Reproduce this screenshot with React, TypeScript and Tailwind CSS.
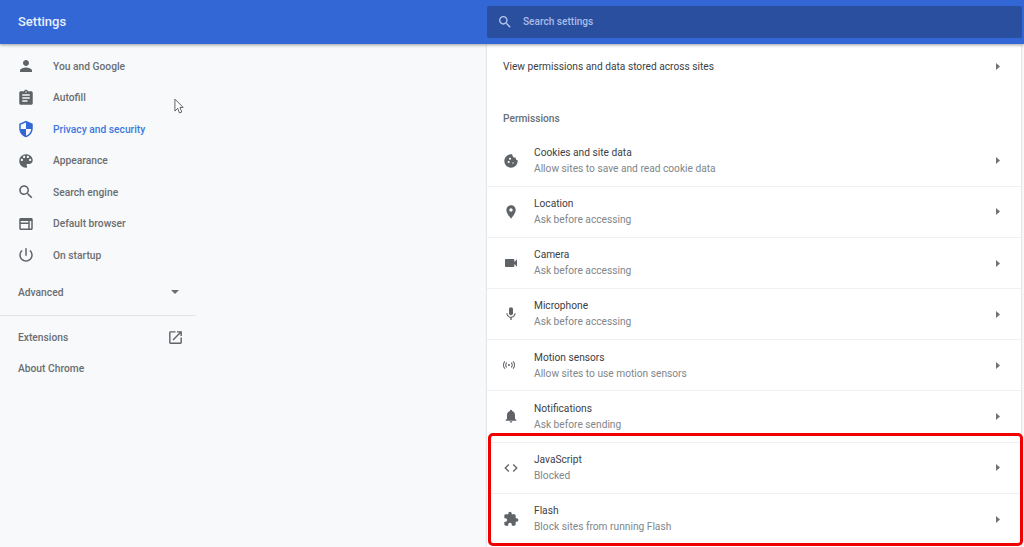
const PATHS = {
  person: "M12 12c2.21 0 4-1.79 4-4s-1.79-4-4-4-4 1.79-4 4 1.79 4 4 4zm0 2c-2.67 0-8 1.34-8 4v2h16v-2c0-2.66-5.33-4-8-4z",
  assignment: "M19 3h-4.18C14.4 1.84 13.3 1 12 1c-1.3 0-2.4.84-2.82 2H5c-1.1 0-2 .9-2 2v14c0 1.1.9 2 2 2h14c1.1 0 2-.9 2-2V5c0-1.1-.9-2-2-2zm-7 0c.55 0 1 .45 1 1s-.45 1-1 1-1-.45-1-1 .45-1 1-1zm2 14H7v-2h7v2zm3-4H7v-2h10v2zm0-4H7V7h10v2z",
  security: "M12 1L3 5v6c0 5.55 3.84 10.74 9 12 5.16-1.26 9-6.45 9-12V5l-9-4zm0 10.99h7c-.53 4.12-3.28 7.79-7 8.94V12H5V6.3l7-3.11v8.8z",
  palette: "M12 3c-4.97 0-9 4.03-9 9s4.03 9 9 9c.83 0 1.5-.67 1.5-1.5 0-.39-.15-.74-.39-1.01-.23-.26-.38-.61-.38-.99 0-.83.67-1.5 1.5-1.5H16c2.76 0 5-2.24 5-5 0-4.42-4.03-8-9-8zm-5.5 9c-.83 0-1.5-.67-1.5-1.5S5.67 9 6.5 9 8 9.67 8 10.5 7.33 12 6.5 12zm3-4C8.67 8 8 7.33 8 6.5S8.67 5 9.5 5s1.5.67 1.5 1.5S10.33 8 9.5 8zm5 0c-.83 0-1.5-.67-1.5-1.5S13.67 5 14.5 5s1.5.67 1.5 1.5S15.33 8 14.5 8zm3 4c-.83 0-1.5-.67-1.5-1.5S16.67 9 17.5 9s1.5.67 1.5 1.5-.67 1.5-1.5 1.5z",
  search: "M15.5 14h-.79l-.28-.27C15.41 12.59 16 11.11 16 9.5 16 5.91 13.09 3 9.5 3S3 5.91 3 9.5 5.91 16 9.5 16c1.61 0 3.09-.59 4.23-1.57l.27.28v.79l5 4.99L20.49 19l-4.99-5zm-6 0C7.01 14 5 11.99 5 9.5S7.01 5 9.5 5 14 7.01 14 9.5 11.99 14 9.5 14z",
  web: "M19 4H5c-1.11 0-2 .9-2 2v12c0 1.1.89 2 2 2h14c1.1 0 2-.9 2-2V6c0-1.1-.89-2-2-2zm-4 14H5V12h10v6zm4 0h-2V8h2v10zM5 10V8h10v2H5z",
  power: "M13 3h-2v10h2V3zm4.83 2.17l-1.42 1.42C17.99 7.86 19 9.81 19 12c0 3.87-3.13 7-7 7s-7-3.13-7-7c0-2.19 1.01-4.14 2.58-5.42L6.17 5.17C4.23 6.82 3 9.26 3 12c0 4.97 4.03 9 9 9s9-4.03 9-9c0-2.74-1.23-5.18-3.17-6.83z",
  open: "M19 19H5V5h7V3H5c-1.11 0-2 .9-2 2v14c0 1.1.89 2 2 2h14c1.1 0 2-.9 2-2v-7h-2v7zM14 3v2h3.59l-9.83 9.83 1.41 1.41L19 6.41V10h2V3h-7z",
  cookie: "M21.95 10.99c-1.79-.03-3.7-1.95-2.68-4.22-2.97 1-5.78-1.59-5.19-4.56C7.11.74 2 6.41 2 12c0 5.52 4.48 10 10 10 5.89 0 10.54-5.08 9.95-11.01zM8.5 15c-.83 0-1.5-.67-1.5-1.5S7.67 12 8.5 12s1.5.67 1.5 1.5S9.33 15 8.5 15zm2-5C9.67 10 9 9.33 9 8.5S9.67 7 10.5 7s1.5.67 1.5 1.5-.67 1.5-1.5 1.5zm4.5 6c-.55 0-1-.45-1-1s.45-1 1-1 1 .45 1 1-.45 1-1 1z",
  location: "M12 2C8.13 2 5 5.13 5 9c0 5.25 7 13 7 13s7-7.75 7-13c0-3.87-3.13-7-7-7zm0 9.5c-1.38 0-2.5-1.12-2.5-2.5s1.12-2.5 2.5-2.5 2.5 1.12 2.5 2.5-1.12 2.5-2.5 2.5z",
  camera: "M17 10.5V7c0-.55-.45-1-1-1H4c-.55 0-1 .45-1 1v10c0 .55.45 1 1 1h12c.55 0 1-.45 1-1v-3.5l4 4v-11l-4 4z",
  mic: "M12 14c1.66 0 2.99-1.34 2.99-3L15 5c0-1.66-1.34-3-3-3S9 3.34 9 5v6c0 1.66 1.34 3 3 3zm5.3-3c0 3-2.54 5.1-5.3 5.1S6.7 14 6.7 11H5c0 3.41 2.72 6.23 6 6.72V21h2v-3.28c3.28-.48 6-3.3 6-6.72h-1.7z",
  sensors: "M12 10a2 2 0 1 0 0 4 2 2 0 0 0 0-4zM7.05 6.4l1.3 1.5C7.2 9 6.5 10.4 6.5 12s.7 3 1.85 4.1l-1.3 1.5C5.2 16.1 4.5 14.2 4.5 12s.7-4.1 2.55-5.6zm9.9 0c1.85 1.5 2.55 3.4 2.55 5.6s-.7 4.1-2.55 5.6l-1.3-1.5c1.15-1.1 1.85-2.5 1.85-4.1s-.7-3-1.85-4.1zM3.4 4l1.3 1.5C2.9 7.2 2 9.5 2 12s.9 4.8 2.7 6.5L3.4 20C1.2 17.9 0 15.1 0 12s1.2-5.9 3.4-8zm17.2 0C22.8 6.1 24 8.9 24 12s-1.2 5.9-3.4 8l-1.3-1.5c1.8-1.7 2.7-4 2.7-6.5s-.9-4.8-2.7-6.5z",
  bell: "M12 22c1.1 0 2-.9 2-2h-4c0 1.1.89 2 2 2zm6-6v-5c0-3.07-1.64-5.64-4.5-6.32V4c0-.83-.67-1.5-1.5-1.5s-1.5.67-1.5 1.5v.68C7.63 5.36 6 7.92 6 11v5l-2 2v1h16v-1l-2-2z",
  code: "M9.4 16.6L4.8 12l4.6-4.6L8 6l-6 6 6 6 1.4-1.4zm5.2 0l4.6-4.6-4.6-4.6L16 6l6 6-6 6-1.4-1.4z",
  extension: "M20.5 11H19V7c0-1.1-.9-2-2-2h-4V3.5C13 2.12 11.88 1 10.5 1S8 2.12 8 3.5V5H4c-1.1 0-1.99.9-1.99 2v3.8H3.5c1.49 0 2.7 1.21 2.7 2.7s-1.21 2.7-2.7 2.7H2V20c0 1.1.9 2 2 2h3.8v-1.5c0-1.49 1.21-2.7 2.7-2.7 1.49 0 2.7 1.21 2.7 2.7V22H17c1.1 0 2-.9 2-2v-4h1.5c1.38 0 2.5-1.12 2.5-2.5S21.88 11 20.5 11z",
};

type IconName = keyof typeof PATHS;

function Icon({ name, className }: { name: IconName; className?: string }) {
  return (
    <svg viewBox="0 0 24 24" fill="currentColor" className={className}>
      <path d={PATHS[name]} />
    </svg>
  );
}

function Arrow() {
  return (
    <svg viewBox="0 0 4 7" fill="currentColor" className="h-[7px] w-1 shrink-0 text-[#6f7377]">
      <path d="M0 0l4 3.5-4 3.5z" />
    </svg>
  );
}

const NAV: { icon: IconName; label: string; active?: boolean }[] = [
  { icon: "person", label: "You and Google" },
  { icon: "assignment", label: "Autofill" },
  { icon: "security", label: "Privacy and security", active: true },
  { icon: "palette", label: "Appearance" },
  { icon: "search", label: "Search engine" },
  { icon: "web", label: "Default browser" },
  { icon: "power", label: "On startup" },
];

const PERMISSIONS: { icon: IconName; title: string; sub: string; small?: boolean }[] = [
  { icon: "cookie", title: "Cookies and site data", sub: "Allow sites to save and read cookie data" },
  { icon: "location", title: "Location", sub: "Ask before accessing" },
  { icon: "camera", title: "Camera", sub: "Ask before accessing" },
  { icon: "mic", title: "Microphone", sub: "Ask before accessing" },
  { icon: "sensors", title: "Motion sensors", sub: "Allow sites to use motion sensors", small: true },
  { icon: "bell", title: "Notifications", sub: "Ask before sending" },
  { icon: "code", title: "JavaScript", sub: "Blocked" },
  { icon: "extension", title: "Flash", sub: "Block sites from running Flash" },
];

function Sidebar() {
  return (
    <aside className="w-[196px] shrink-0 pt-[6.5px] text-[10.25px] font-medium text-[#6a6e72]">
      {NAV.map((item) => (
        <div key={item.label} className={`flex h-[31.5px] items-center pl-[17px] ${item.active ? "text-[#4078e0]" : ""}`}>
          <Icon name={item.icon} className={`h-[18px] w-[18px] ${item.active ? "text-[#3367d6]" : "text-[#5f6368]"}`} />
          <span className="ml-[18px]">{item.label}</span>
        </div>
      ))}
      <div className="mt-[5.5px] flex h-[31.5px] items-center justify-between pl-[18px] pr-[17px]">
        <span>Advanced</span>
        <svg viewBox="0 0 8 4" fill="currentColor" className="h-1 w-2"><path d="M0 0h8L4 4z" /></svg>
      </div>
      <div className="mt-[6.5px] border-t border-[#e3e4e6]" />
      <div className="mt-[6px] flex h-[31.5px] items-center justify-between pl-[18px] pr-[12px]">
        <span>Extensions</span>
        <Icon name="open" className="h-[17px] w-[17px] text-[#5f6368]" />
      </div>
      <div className="flex h-[31.5px] items-center pl-[18px]">About Chrome</div>
    </aside>
  );
}

function PermissionRow({ icon, title, sub, small }: { icon: IconName; title: string; sub: string; small?: boolean }) {
  return (
    <div className="flex h-[51.14px] items-center border-b border-[#f0f1f2] pl-[15.5px] pr-[21px] last:border-b-0">
      <div className="flex w-[31.5px] shrink-0">
        <Icon name={icon} className={small ? "h-[12px] w-[12px]" : "h-[16px] w-[16px]"} />
      </div>
      <div className="flex-1 pt-[0.5px] text-[10.2px] leading-[16px]">
        <div className="text-[#3c4043]">{title}</div>
        <div className="text-[#80868b]">{sub}</div>
      </div>
      <Arrow />
    </div>
  );
}

export default function App() {
  return (
    <div className="relative flex h-[547px] w-[1024px] flex-col overflow-hidden bg-[#f8f9fa] font-['Roboto',sans-serif]">
      <header className="z-10 flex h-[44px] shrink-0 items-center bg-[#3367d6] shadow-[0_1px_3px_rgba(60,64,67,0.5)]">
        <div className="w-[487px] pl-[18px] text-[13px] font-medium text-[#e8f0fe]">Settings</div>
        <div className="mb-[1px] flex h-[32px] w-[535px] items-center rounded-[2px] bg-[#2a4f9f] pl-[10px]">
          <Icon name="search" className="h-[16px] w-[16px] text-[#b6c8ef]" />
          <span className="ml-[10px] text-[10.1px] font-medium text-[#a9bde8]">Search settings</span>
        </div>
      </header>
      <div className="flex min-h-0 flex-1">
        <Sidebar />
        <main className="ml-[291px] w-[534px] shrink-0 bg-white text-[#5f6368] shadow-[0_0_2px_rgba(60,64,67,0.3)]">
          <div className="flex h-[44px] items-center pl-[16px] pr-[21px]">
            <span className="flex-1 pt-[0.5px] text-[10.2px] text-[#3c4043]">View permissions and data stored across sites</span>
            <Arrow />
          </div>
          <div className="flex h-[47.8px] items-end pb-[9.3px] pl-[16px] text-[10.2px] font-medium text-[#6a6e72]">Permissions</div>
          {PERMISSIONS.map((row) => (
            <PermissionRow key={row.title} {...row} />
          ))}
        </main>
      </div>
      {/* annotation added over the screenshot */}
      <div className="pointer-events-none absolute left-[488px] top-[433px] h-[113px] w-[535px] rounded-[5px] border-[3px] border-[#f00000]" />
      <svg viewBox="0 0 12 18" className="pointer-events-none absolute left-[174px] top-[98px] h-[17px] w-[11px]" fill="#fff" stroke="#555" strokeWidth="1">
        <path d="M1 1v13l3-3 2 5 2.5-1-2-5H10z" />
      </svg>
    </div>
  );
}
